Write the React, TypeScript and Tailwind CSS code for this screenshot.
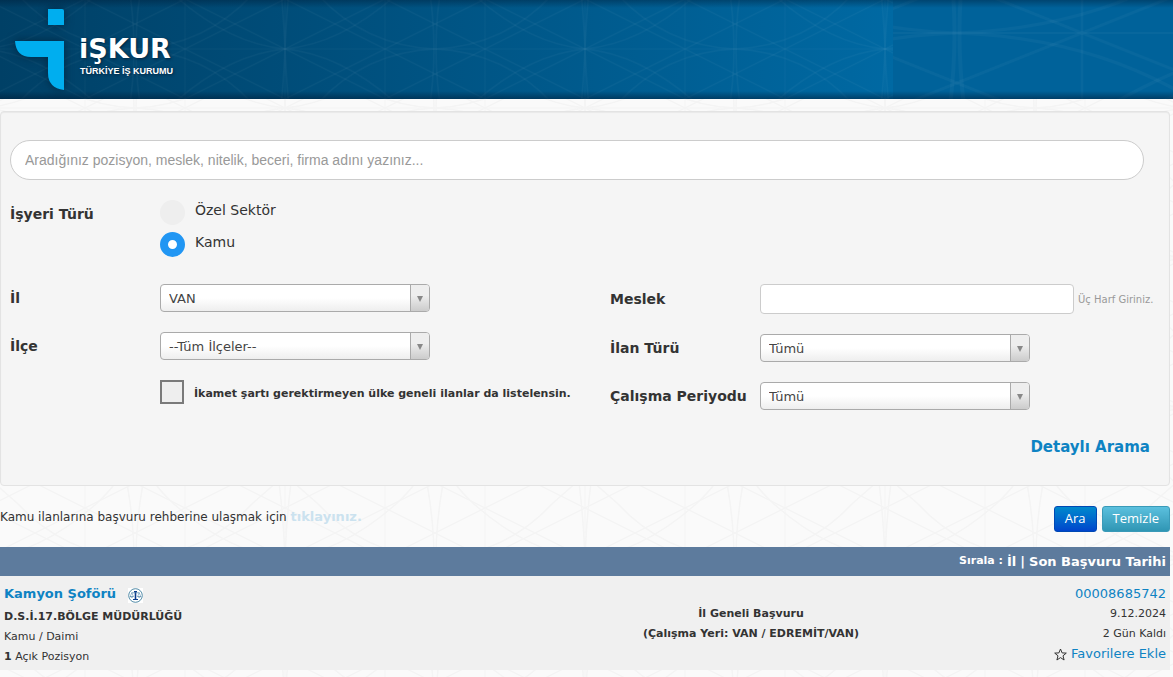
import React, { useState } from "react";

const gridLines = [-250, -150, -50, 50, 150, 250, 350, 450, 550];

function GirihTile() {
  return (
    <g fill="none" stroke="currentColor" strokeWidth="1.5">
      <path d="M0 75H300M150 0V150M50 0V150M250 0V150" strokeWidth="1" />
      {gridLines.map((x) => (
        <path
          key={x}
          d={`M${x - 300} ${-75}L${x + 300} ${225}M${x - 300} ${225}L${x + 300} ${-75}`}
          strokeWidth="1.3"
        />
      ))}
      <path d="M150 75Q95 70 40 22Q25 8 20 0M150 75Q205 70 260 22Q275 8 280 0M150 75Q95 80 40 128Q25 142 20 150M150 75Q205 80 260 128Q275 142 280 150" />
      <path d="M0 75Q70 72 118 20Q135 5 150 -8M300 75Q230 72 182 20Q165 5 150 -8M0 75Q70 78 118 130Q135 145 150 158M300 75Q230 78 182 130Q165 145 150 158" />
      <path d="M-1 75Q-1 40 -8 0M1 75Q1 40 8 0M299 75Q299 40 292 0M-1 75Q-1 110 -8 150M1 75Q1 110 8 150M299 75Q299 110 292 150" />
      <path d="M150 75Q148 30 144 0M150 75Q152 30 156 0M150 75Q148 120 144 150M150 75Q152 120 156 150" />
    </g>
  );
}

function Backdrop({ id, transform, className }: { id: string; transform: string; className: string }) {
  return (
    <svg aria-hidden="true" className={className}>
      <defs>
        <pattern id={id} width="300" height="150" patternUnits="userSpaceOnUse" patternTransform={transform}>
          <GirihTile />
        </pattern>
      </defs>
      <rect width="100%" height="100%" fill={`url(#${id})`} />
    </svg>
  );
}

function Logo() {
  return (
    <a href="#" className="flex text-white">
      <svg width="50" height="82" viewBox="0 0 50 82" fill="#00aeef" aria-hidden="true" className="overflow-visible drop-shadow-[0_0_5px_rgba(0,20,40,0.6)]">
        <path d="M33 1H47Q49 1 49 3V17H33Z" />
        <path d="M0 33H49V82Q33 80 33 65V49H16Q1 49 0 33Z" />
      </svg>
      <span className="ml-[14px] mt-[27px] flex flex-col [text-shadow:1px_1px_3px_rgba(0,20,40,0.7)]">
        <span className="text-[27px] font-bold leading-[28px]">iŞKUR</span>
        <span className="ml-px whitespace-nowrap font-['Liberation_Sans',Arial,sans-serif] text-[9px] font-bold leading-[16px]">TÜRKİYE İŞ KURUMU</span>
      </span>
    </a>
  );
}

function Select({ id, options }: { id: string; options: string[] }) {
  return (
    <div className="relative w-[270px]">
      <select
        id={id}
        className="block h-7 w-full appearance-none rounded-[4px] border border-[#aaa] bg-linear-to-b from-white from-50% to-[#eee] pl-2 pr-7 pt-px text-[13px] text-[#444]"
      >
        {options.map((o) => (
          <option key={o}>{o}</option>
        ))}
      </select>
      <span className="pointer-events-none absolute inset-y-px right-px flex w-[19px] items-center justify-center rounded-r-[3px] border-l border-[#aaa] bg-linear-to-b from-[#eee] from-40% to-[#ccc]">
        <svg width="6" height="6" viewBox="0 0 6 6" fill="#888" className="mr-px mt-0.5" aria-hidden="true">
          <path d="M0 0H6L3 6Z" />
        </svg>
      </span>
    </div>
  );
}

function Field({ id, label, children }: { id: string; label: string; children: React.ReactNode }) {
  return (
    <div className="flex items-center">
      <label htmlFor={id} className="w-[150px] shrink-0 whitespace-nowrap text-[14px] font-bold">
        {label}
      </label>
      {children}
    </div>
  );
}

function Radio({ label, checked, onChange }: { label: string; checked: boolean; onChange: () => void }) {
  return (
    <label className="flex h-8 items-start">
      <input
        type="radio"
        name="sector"
        checked={checked}
        onChange={onChange}
        className="size-[25px] appearance-none rounded-full bg-[#eee] checked:border-8 checked:border-[#2196f3] checked:bg-white"
      />
      <span className="ml-2.5 text-[14px] leading-5">{label}</span>
    </label>
  );
}

function ScalesIcon() {
  return (
    <svg width="15" height="15" viewBox="0 0 15 15" fill="none" stroke="#4a80a8" aria-label="Kamu ilanı" role="img" className="mt-0.5 bg-white">
      <circle cx="7.5" cy="7.5" r="6.8" stroke="#3d7d9c" strokeWidth="0.9" />
      <path d="M7.5 3V11.5" strokeWidth="1.6" stroke="#0b3b8c" />
      <path d="M6 3.6H9M5 11.5H10" strokeWidth="1.1" stroke="#0b3b8c" />
      <path d="M3.5 4.8H11.5" strokeWidth="0.7" />
      <path d="M3.8 4.8L2.2 8.5H5.4ZM11.2 4.8L9.6 8.5H12.8Z" strokeWidth="0.5" />
      <path d="M2.2 8.5Q3.8 10 5.4 8.5M9.6 8.5Q11.2 10 12.8 8.5" strokeWidth="0.9" />
    </svg>
  );
}

export default function App() {
  const [sector, setSector] = useState("Kamu");
  const [national, setNational] = useState(false);

  return (
    <div className="relative isolate min-h-screen bg-[#fafafa] font-[Verdana,'DejaVu_Sans',sans-serif] text-[11px] text-[#333]">
      <Backdrop id="page-lines" transform="translate(135 33)" className="absolute inset-0 -z-10 h-full w-full text-[#f4f4f4]" />

      <header className="relative isolate flex h-[99px] overflow-hidden bg-linear-to-r from-[#004066] to-[#0069a3] to-[893px] pl-[15px] pt-2">
        <Backdrop id="header-lines" transform="translate(135 -26)" className="absolute inset-0 -z-10 h-full w-full text-white/3" />
        <div className="absolute inset-y-0 left-[893px] right-0 -z-10 bg-[#00629a]">
          <Backdrop id="header-lines-wide" transform="translate(64 -117) scale(2.5 2)" className="h-full w-full text-white/3" />
        </div>
        <div className="pointer-events-none absolute inset-0 -z-10 bg-linear-to-b from-[#001932]/40 from-0% via-transparent via-8% to-transparent" />
        <div className="pointer-events-none absolute inset-0 -z-10 bg-linear-to-t from-[#001932]/50 from-0% via-transparent via-8% to-transparent" />
        <Logo />
      </header>

      <main className="mr-[3px] mt-3">
        <form onSubmit={(e) => e.preventDefault()}>
          <section className="rounded-[4px] border border-[#e3e3e3] bg-[#f5f5f5] px-[9px] pb-7 pt-7 shadow-[inset_0_1px_1px_rgba(0,0,0,0.05)]">
            <input
              type="text"
              aria-label="Arama"
              placeholder="Aradığınız pozisyon, meslek, nitelik, beceri, firma adını yazınız..."
              className="block h-10 w-[calc(100%-16px)] rounded-[20px] border border-[#ccc] bg-white px-[14px] font-['Liberation_Sans',Arial,sans-serif] text-[14px] placeholder:text-[#999]"
            />

            <fieldset className="mt-5 flex">
              <legend className="float-left w-[150px] pt-1 text-[14px] font-bold leading-5">İşyeri Türü</legend>
              <div>
                <Radio label="Özel Sektör" checked={sector === "Özel"} onChange={() => setSector("Özel")} />
                <Radio label="Kamu" checked={sector === "Kamu"} onChange={() => setSector("Kamu")} />
              </div>
            </fieldset>

            <div className="mt-5 grid grid-cols-[600px_1fr]">
              <div className="flex flex-col gap-5">
                <Field id="il" label="İl">
                  <Select id="il" options={["VAN"]} />
                </Field>
                <Field id="ilce" label="İlçe">
                  <Select id="ilce" options={["--Tüm İlçeler--"]} />
                </Field>
                <label className="ml-[150px] flex items-center">
                  <input
                    type="checkbox"
                    checked={national}
                    onChange={() => setNational(!national)}
                    className="size-6 appearance-none border-2 border-[#7a7a7a] bg-[#eee] checked:bg-[#2196f3]"
                  />
                  <span className="ml-2.5 mt-1 font-bold">İkamet şartı gerektirmeyen ülke geneli ilanlar da listelensin.</span>
                </label>
              </div>
              <div className="flex flex-col gap-5">
                <Field id="meslek" label="Meslek">
                  <input id="meslek" type="text" className="h-[30px] w-[314px] rounded-[4px] border border-[#ccc] bg-white px-2 text-[13px]" />
                  <span className="ml-1 whitespace-nowrap text-[10px] text-[#999]">Üç Harf Giriniz.</span>
                </Field>
                <Field id="ilan" label="İlan Türü">
                  <Select id="ilan" options={["Tümü"]} />
                </Field>
                <Field id="periyot" label="Çalışma Periyodu">
                  <Select id="periyot" options={["Tümü"]} />
                </Field>
              </div>
            </div>

            <div className="mr-2.5 mt-[27px] flex justify-end">
              <a href="#" className="text-[15px] font-bold leading-5 text-[#0e83c3]">
                Detaylı Arama
              </a>
            </div>
          </section>

          <div className="mt-5 flex h-[41px] items-start justify-between">
            <p className="text-[12px] leading-[22px]">
              Kamu ilanlarına başvuru rehberine ulaşmak için{" "}
              <a href="#" className="text-[13px] font-bold text-[#cbe2ef]">
                tıklayınız.
              </a>
            </p>
            <div className="flex gap-[5px] font-['Open_Sans',sans-serif] text-[13px] text-white [text-shadow:0_-1px_0_rgba(0,0,0,0.25)]">
              <button type="submit" className="h-[26px] rounded-[3px] border border-[#0048b4] bg-linear-to-b from-[#0088cc] to-[#0044cc] px-2.5">
                Ara
              </button>
              <button type="reset" className="h-[26px] rounded-[3px] border border-[#3a9ab8] bg-linear-to-b from-[#5bc0de] to-[#2f96b4] px-2.5">
                Temizle
              </button>
            </div>
          </div>
        </form>

        <section>
          <div className="flex h-[29px] items-center justify-end gap-1 bg-[#5d7b9d] pr-1 text-[13px] font-bold text-white">
            <span className="text-[11px]">Sırala :</span>
            <a href="#">İl</a>
            <span>|</span>
            <a href="#">Son Başvuru Tarihi</a>
          </div>
          <article className="grid grid-cols-[500px_1fr_168px] bg-[#f0f0f0] pb-[3px] leading-5">
            <div className="pl-1 pt-2">
              <h2 className="mb-[3px] flex items-center gap-3 text-[13px] font-bold">
                <a href="#" className="text-[#0e83c3]">
                  Kamyon Şoförü
                </a>
                <ScalesIcon />
              </h2>
              <p className="font-bold">D.S.İ.17.BÖLGE MÜDÜRLÜĞÜ</p>
              <p>Kamu / Daimi</p>
              <p>
                <strong>1</strong> Açık Pozisyon
              </p>
            </div>
            <div className="pt-7 text-center font-bold">
              <p>İl Geneli Başvuru</p>
              <p>(Çalışma Yeri: VAN / EDREMİT/VAN)</p>
            </div>
            <div className="pr-1 pt-2 text-right">
              <a href="#" className="block text-[13px] text-[#0e83c3]">
                00008685742
              </a>
              <p>9.12.2024</p>
              <p>2 Gün Kaldı</p>
              <a href="#" className="flex items-center justify-end gap-1 whitespace-nowrap text-[13px] text-[#0e83c3]">
                <svg width="13" height="13" viewBox="0 0 13 13" fill="none" stroke="#333" aria-hidden="true">
                  <path d="M6.5 1L8.1 4.9L12.3 5.1L9 7.8L10.1 12L6.5 9.6L2.9 12L4 7.8L0.7 5.1L4.9 4.9Z" />
                </svg>
                Favorilere Ekle
              </a>
            </div>
          </article>
        </section>
      </main>
    </div>
  );
}
